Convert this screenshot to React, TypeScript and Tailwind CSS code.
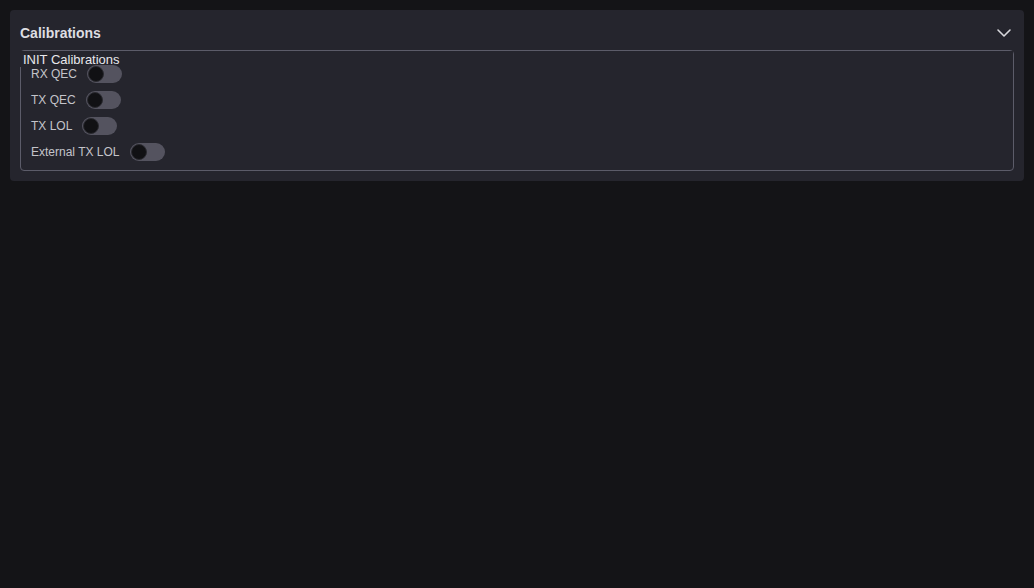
import React, { useState } from 'react';
import { ChevronDown } from 'lucide-react';

type Cal = { id: string; label: string };

const cals: Cal[] = [
  { id: 'rxqec', label: 'RX QEC' },
  { id: 'txqec', label: 'TX QEC' },
  { id: 'txlol', label: 'TX LOL' },
  { id: 'exttxlol', label: 'External TX LOL' },
];

function Toggle({ on, onChange }: { on: boolean; onChange: () => void }) {
  return (
    <button
      onClick={onChange}
      className={`relative flex h-[18px] w-[35px] items-center rounded-full ${on ? 'bg-[#4f7fd8]' : 'bg-[#54535f]'}`}
    >
      <span
        className={`h-[16px] w-[16px] rounded-full border border-[#2a2a30] bg-[#111114] ${on ? 'ml-[18px]' : 'ml-px'}`}
      />
    </button>
  );
}

export default function App() {
  const [state, setState] = useState<Record<string, boolean>>({});
  const [open, setOpen] = useState(true);

  return (
    <div
      className="min-h-[588px] bg-[#141417] p-[10px]"
      style={{ fontFamily: '"Liberation Sans", Arial, sans-serif' }}
    >
      <div className="rounded-[4px] bg-[#25252d] px-[10px] pb-[10px]">
        <div
          className="flex h-[40px] items-center justify-between"
          onClick={() => setOpen(v => !v)}
        >
          <span className="pt-[6px] text-[14px] font-bold text-[#dedee2]">Calibrations</span>
          <ChevronDown size={24} strokeWidth={1.6} className="mr-[-2px] mt-[6px] text-[#d8d8dc]" />
        </div>
        {open && (
          <div className="rounded-[4px] border border-[#5c5c69] pb-[9px]">
            <div className="-ml-px h-[16px] bg-[#25252d] pl-[3px] pt-px text-[13px] leading-[16px] text-[#e8e8ec]">
              INIT Calibrations
            </div>
            <div className="-mt-[2px] flex flex-col gap-[8px] pl-[10px]">
              {cals.map(c => (
                <div key={c.id} className="flex h-[18px] items-center gap-[10px]">
                  <span className="text-[12px] text-[#c4c4ca]">{c.label}</span>
                  <Toggle
                    on={!!state[c.id]}
                    onChange={() => setState(s => ({ ...s, [c.id]: !s[c.id] }))}
                  />
                </div>
              ))}
            </div>
          </div>
        )}
      </div>
    </div>
  );
}
